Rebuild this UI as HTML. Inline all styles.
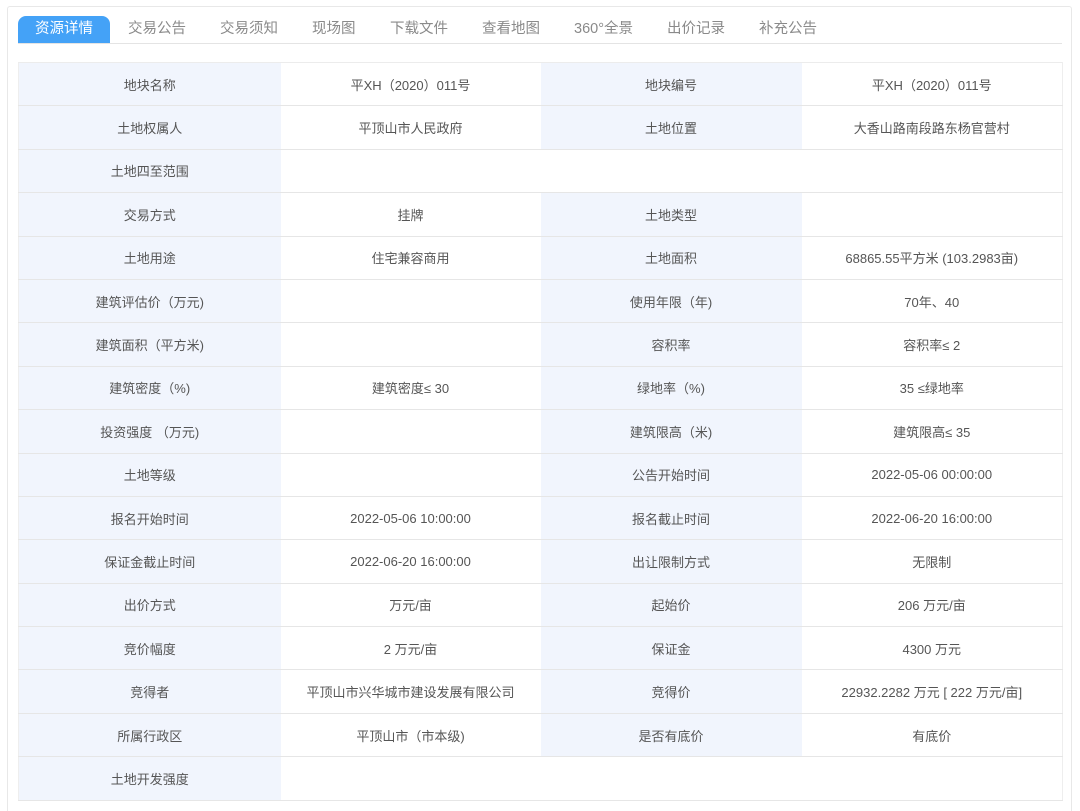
<!DOCTYPE html>
<html><head><meta charset="utf-8"><style>
*{margin:0;padding:0;box-sizing:border-box}
html,body{width:1080px;height:811px;overflow:hidden}
body{background:#fff;font-family:"Liberation Sans","Noto Sans CJK SC",sans-serif;position:relative}
.outer{position:absolute;left:7px;top:6px;width:1065px;height:805px;border:1px solid #e8e8e8;border-bottom:none;border-radius:3px 3px 0 0}
.tabs{position:absolute;left:18px;top:16px;width:1044px;height:28px;border-bottom:1px solid #e4e4e4}
.tab{position:absolute;top:0;height:27px;line-height:26px;font-size:14.5px;color:#8a8a8a}
.tab.act{background:#44a2f7;color:#fff;border-radius:8px 8px 0 0;width:92px;text-align:center;left:0}
table{position:absolute;left:18px;top:62px;width:1044px;border-collapse:collapse;table-layout:fixed;border-top:1px solid #ececec;border-left:1px solid #eee;border-right:1px solid #eee}
td{height:43.4px;border-bottom:1px solid #e6e6e6;text-align:center;font-size:13px;color:#555;padding:0}
td.l{background:#f1f5fd}
</style></head><body>
<div class="outer"></div>
<div class="tabs">
<div class="tab act">资源详情</div>
<div class="tab" style="left:110px">交易公告</div>
<div class="tab" style="left:202px">交易须知</div>
<div class="tab" style="left:294px">现场图</div>
<div class="tab" style="left:372px">下载文件</div>
<div class="tab" style="left:464px">查看地图</div>
<div class="tab" style="left:556px">360°全景</div>
<div class="tab" style="left:649px">出价记录</div>
<div class="tab" style="left:741px">补充公告</div>
</div>
<table>
<colgroup><col style="width:262px"><col style="width:260px"><col style="width:261px"><col style="width:261px"></colgroup>
<tr><td class="l">地块名称</td><td>平XH（2020）011号</td><td class="l">地块编号</td><td>平XH（2020）011号</td></tr>
<tr><td class="l">土地权属人</td><td>平顶山市人民政府</td><td class="l">土地位置</td><td>大香山路南段路东杨官营村</td></tr>
<tr><td class="l">土地四至范围</td><td colspan="3"></td></tr>
<tr><td class="l">交易方式</td><td>挂牌</td><td class="l">土地类型</td><td></td></tr>
<tr><td class="l">土地用途</td><td>住宅兼容商用</td><td class="l">土地面积</td><td>68865.55平方米 (103.2983亩)</td></tr>
<tr><td class="l">建筑评估价（万元)</td><td></td><td class="l">使用年限（年)</td><td>70年、40</td></tr>
<tr><td class="l">建筑面积（平方米)</td><td></td><td class="l">容积率</td><td>容积率≤ 2</td></tr>
<tr><td class="l">建筑密度（%)</td><td>建筑密度≤ 30</td><td class="l">绿地率（%)</td><td>35 ≤绿地率</td></tr>
<tr><td class="l">投资强度 （万元)</td><td></td><td class="l">建筑限高（米)</td><td>建筑限高≤ 35</td></tr>
<tr><td class="l">土地等级</td><td></td><td class="l">公告开始时间</td><td>2022-05-06 00:00:00</td></tr>
<tr><td class="l">报名开始时间</td><td>2022-05-06 10:00:00</td><td class="l">报名截止时间</td><td>2022-06-20 16:00:00</td></tr>
<tr><td class="l">保证金截止时间</td><td>2022-06-20 16:00:00</td><td class="l">出让限制方式</td><td>无限制</td></tr>
<tr><td class="l">出价方式</td><td>万元/亩</td><td class="l">起始价</td><td>206 万元/亩</td></tr>
<tr><td class="l">竞价幅度</td><td>2 万元/亩</td><td class="l">保证金</td><td>4300 万元</td></tr>
<tr><td class="l">竞得者</td><td>平顶山市兴华城市建设发展有限公司</td><td class="l">竞得价</td><td>22932.2282 万元 [ 222 万元/亩]</td></tr>
<tr><td class="l">所属行政区</td><td>平顶山市（市本级)</td><td class="l">是否有底价</td><td>有底价</td></tr>
<tr><td class="l">土地开发强度</td><td colspan="3"></td></tr>
</table>
</body></html>
